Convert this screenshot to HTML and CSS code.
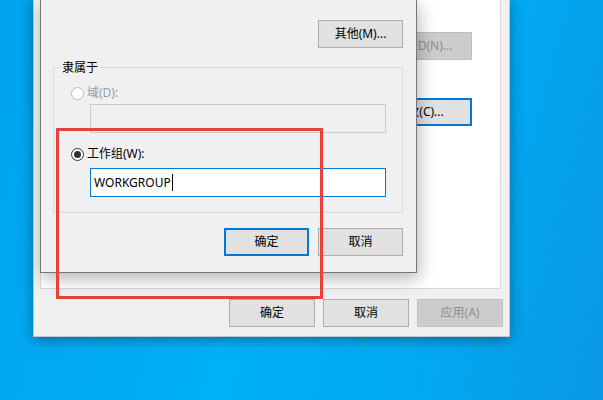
FILE: index.html
```html
<!DOCTYPE html>
<html lang="zh-CN">
<head>
  <meta charset="UTF-8" />
  <meta name="viewport" content="width=device-width, initial-scale=1.0"/>
  <title>计算机名/域更改</title>
  <link rel="stylesheet" href="styles.css">
</head>
<body>
  <div class="desktop">

    <!-- SYSTEM PROPERTIES (behind) -->
    <div class="win sysprops">
      <div class="tab-page">
        <button class="btn wide disabled">网络 ID(N)...</button>
        <button class="btn wide focus change">更改(C)...</button>
      </div>
      <div class="btn-row">
        <button class="btn">确定</button>
        <button class="btn">取消</button>
        <button class="btn disabled">应用(A)</button>
      </div>
    </div>

    <!-- COMPUTER NAME / DOMAIN CHANGES (front) -->
    <div class="win namechange">
      <div class="top-row">
        <button class="btn small">其他(M)...</button>
      </div>

      <div class="group">
        <div class="group-title">隶属于</div>
        <div class="radio-row off">
          <span class="radio"></span>
          <span>域(D):</span>
        </div>
        <div class="field disabled"></div>
        <div class="radio-row">
          <span class="radio checked"></span>
          <span>工作组(W):</span>
        </div>
        <div class="field active">WORKGROUP<span class="caret"></span></div>
      </div>

      <div class="btn-row">
        <button class="btn small focus">确定</button>
        <button class="btn small">取消</button>
      </div>
    </div>

    <!-- annotation -->
    <div class="mark"></div>
  </div>
</body>
</html>
```

FILE: styles.css
```css
/* Reset & Base */
* { box-sizing: border-box; margin: 0; padding: 0; }
body {
  font-family: "Noto Sans", "Noto Sans CJK SC", sans-serif;
  font-size: 12px;
  line-height: 16px;
  color: #000;
  overflow: hidden;
}

/* Desktop */
.desktop {
  position: relative;
  width: 603px;
  height: 400px;
  overflow: hidden;
  background: linear-gradient(105deg, #00a3ee 0%, #00b1f6 45%, #00abf3 70%, #0a98e3 100%);
}

/* Windows */
.win {
  position: absolute;
  background: #f0f0f0;
  display: flex;
  flex-direction: column;
}
.sysprops {
  left: 33px;
  top: -2px;
  width: 477px;
  height: 339px;
  padding: 0 6px 9px 6px;
  border: 1px solid rgba(0,0,0,0.18);
  box-shadow: 0 3px 12px rgba(0,0,0,0.35);
}
.namechange {
  left: 40px;
  top: -1px;
  width: 377px;
  height: 274px;
  padding: 20px 13px 0 12px;
  border: 1px solid #767676;
  box-shadow: 2px 6px 16px rgba(0,0,0,0.28);
}

/* Tab page */
.tab-page {
  flex: 1;
  margin-right: 2px;
  background: #fff;
  border: 1px solid #d9d9d9;
  display: flex;
  flex-direction: column;
  align-items: flex-end;
  padding: 32px 28px 0 0;
}
.tab-page .change {
  margin-top: 38px;
}

/* Buttons */
.btn {
  width: 86px;
  height: 28px;
  font: inherit;
  color: #000;
  background: #e1e1e1;
  border: 1px solid #adadad;
  display: flex;
  align-items: center;
  justify-content: center;
}
.btn.small { width: 85px; }
.btn.wide { width: 105px; }
.btn.focus { border: 2px solid #0078d7; }
.btn.disabled {
  background: #cccccc;
  border-color: #bfbfbf;
  color: #8e8e8e;
}
.btn-row {
  display: flex;
  justify-content: flex-end;
  gap: 8px;
  margin-top: 10px;
}
.namechange .btn-row {
  gap: 9px;
  margin-top: 15px;
}
.top-row {
  display: flex;
  justify-content: flex-end;
}

/* Group box */
.group {
  margin-top: 19px;
  border: 1px solid #dcdcdc;
  padding: 0 0 15px 17px;
}
.group-title {
  width: fit-content;
  margin: -8px 0 0 -11px;
  padding: 0 2px;
  background: #f0f0f0;
}
.radio-row {
  display: flex;
  align-items: center;
  gap: 3px;
  margin-top: 9px;
}
.radio-row + .field + .radio-row {
  margin-top: 13px;
}
.radio-row.off { color: #9a9a9a; }
.radio {
  width: 13px;
  height: 13px;
  border-radius: 50%;
  border: 1px solid #333;
  background: #fff;
  display: flex;
  align-items: center;
  justify-content: center;
}
.radio-row.off .radio { border-color: #bcbcbc; }
.radio.checked::after {
  content: "";
  width: 7px;
  height: 7px;
  border-radius: 50%;
  background: #333;
}

/* Text fields */
.field {
  width: 296px;
  height: 29px;
  margin-left: 19px;
  border: 1px solid #cccccc;
  background: #f0f0f0;
  padding-left: 3px;
  line-height: 27px;
  display: flex;
  align-items: center;
}
.field.disabled { margin-top: 3px; }
.field.active {
  margin-top: 6px;
  background: #fff;
  border-color: #0078d7;
}
.caret {
  width: 1px;
  height: 17px;
  margin-left: 1px;
  background: #000;
}

/* Annotation */
.mark {
  position: absolute;
  left: 56px;
  top: 128px;
  width: 267px;
  height: 171px;
  border: 3px solid #e8403f;
}
```
